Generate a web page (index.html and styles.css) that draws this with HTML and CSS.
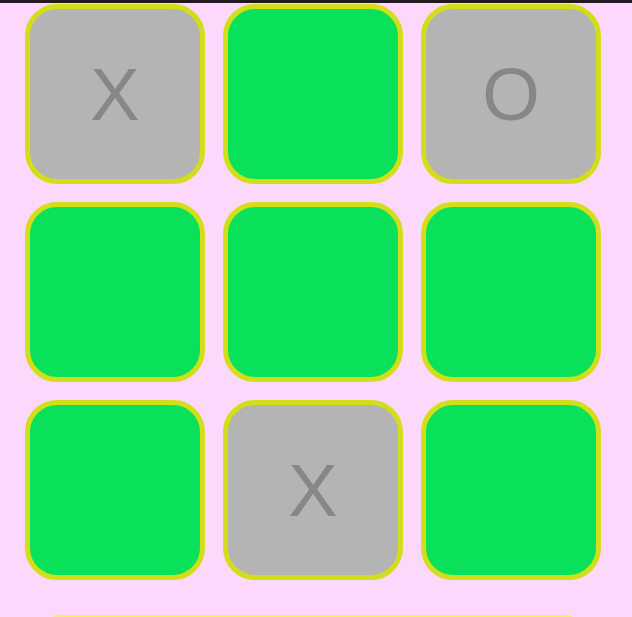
FILE: index.html
```html
<!DOCTYPE html>
<html>
<head>
<meta charset="utf-8">
<link rel="stylesheet" href="styles.css">
</head>
<body>
<div class="topbar"></div>
<div class="board">
  <div class="cell played">X</div>
  <div class="cell"></div>
  <div class="cell played">O</div>
  <div class="cell"></div>
  <div class="cell"></div>
  <div class="cell"></div>
  <div class="cell"></div>
  <div class="cell played">X</div>
  <div class="cell"></div>
</div>
<div class="status"></div>
</body>
</html>
```
FILE: styles.css
```css
html, body {
  margin: 0;
  padding: 0;
  background: #fcd9fc;
  height: 100%;
  overflow: hidden;
}
body {
  font-family: "Liberation Sans", Arial, sans-serif;
}
.topbar {
  height: 3px;
  background: #1f1b1f;
}
.board {
  display: grid;
  grid-template-columns: repeat(3, 180px);
  grid-auto-rows: 180px;
  gap: 18px;
  padding: 1px 0 0 25px;
}
.cell {
  box-sizing: border-box;
  border: 5px solid #d2de1a;
  border-radius: 32px;
  background: #0ae15a;
  display: flex;
  align-items: center;
  justify-content: center;
  font-size: 74px;
  color: #878787;
}
.cell.played {
  background: #b4b4b4;
}
.status {
  margin: 35px 0 0 54px;
  width: 518px;
  height: 10px;
  background: #f8ef5a;
}
```
